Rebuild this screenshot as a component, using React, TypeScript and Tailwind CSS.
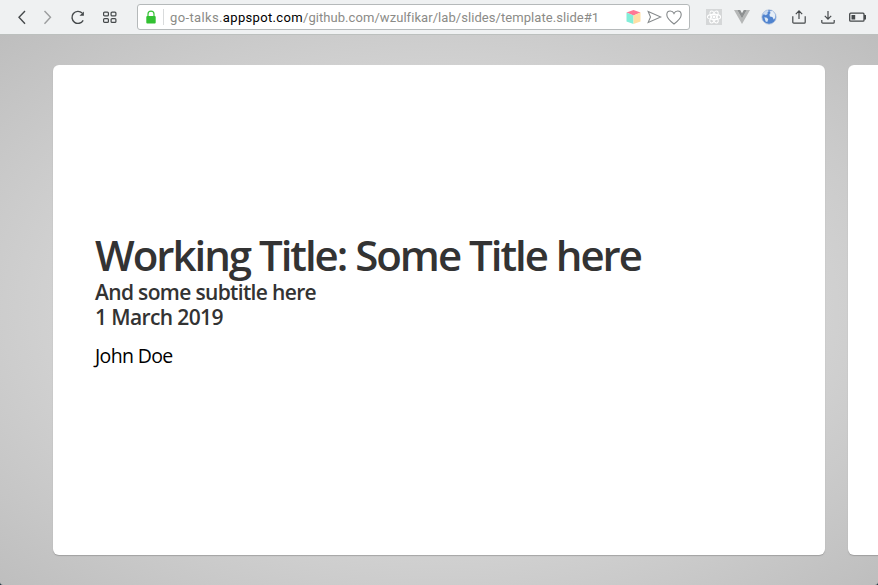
import type { ReactNode } from "react";

function Icon({ w, h, className = "", children }: { w: number; h: number; className?: string; children: ReactNode }) {
  return (
    <svg width={w} height={h} viewBox={`0 0 ${w} ${h}`} fill="none" className={`block shrink-0 ${className}`}>
      {children}
    </svg>
  );
}

function Toolbar() {
  return (
    <header className="flex h-[34px] shrink-0 items-center bg-[#eff1f2] text-[#45494b]">
      <Icon w={12} h={16} className="ml-4">
        <path d="M9 2 3 8.3 9 14.8" stroke="currentColor" strokeWidth="1.4" />
      </Icon>
      <Icon w={12} h={16} className="ml-[14px]">
        <path d="M2.5 2 8.5 8.3 2.5 14.8" stroke="#9b9d9e" strokeWidth="1.4" />
      </Icon>
      <Icon w={16} h={16} className="ml-4">
        <path d="M13.2 11.4A6 6 0 1 1 12.2 4.1" stroke="currentColor" strokeWidth="1.4" />
        <path d="M13.9 2.4v4.4H9.5z" fill="currentColor" />
      </Icon>
      <Icon w={14} h={14} className="ml-[17px]">
        <g stroke="currentColor" strokeWidth="1.2">
          <rect x=".6" y="2.1" width="4.8" height="3.8" rx="1" />
          <rect x="8.1" y="2.1" width="4.8" height="3.8" rx="1" />
          <rect x=".6" y="8.6" width="4.8" height="3.8" rx="1" />
          <rect x="8.1" y="8.6" width="4.8" height="3.8" rx="1" />
        </g>
      </Icon>
      <div className="ml-5 flex h-[26px] w-[553px] shrink-0 items-center rounded-[3px] border border-[#b5b9ba] bg-white">
        <Icon w={10} h={14} className="ml-2">
          <path d="M2 7V4.1a3 3 0 0 1 6 0V7" stroke="#36c336" strokeWidth="1.2" />
          <rect x=".3" y="6" width="9.4" height="7.4" rx="1" fill="#32c132" />
        </Icon>
        <div className="ml-[7px] h-4 w-px bg-[#d9dbdc]" />
        <p className="mt-px ml-[6px] w-[430px] whitespace-nowrap font-['Roboto',sans-serif] text-[13px] leading-4 tracking-[0.06px] text-[#8b8b87]">
          <span className="tracking-[0.37px]">go-talks.</span>
          <span className="tracking-[0.34px] text-black">appspot.com</span>/github.com/wzulfikar/lab/slides/template.slide#1
        </p>
        <Icon w={15} h={16} className="ml-[26px]">
          <path d="M7.5 1 14.5 3.5 7.5 6.5 .5 3.5z" fill="#ff7895" />
          <path d="M.5 3.5 7.5 6.5V15L.5 12.5z" fill="#83eed9" />
          <path d="M14.5 3.5 7.5 6.5V15l7-2.5z" fill="#ffdfa4" />
        </Icon>
        <Icon w={15} h={14} className="ml-[6px]">
          <path d="M1.2 1.6 13.8 7 1.2 12.4 3.5 7z" stroke="#85898b" strokeWidth="1.1" />
        </Icon>
        <Icon w={16} h={15} className="ml-[4px]">
          <path d="M8 14C4.5 11.4.8 8.3.8 4.8.8 2.5 2.3 1 4.3 1 6 1 7.3 2 8 3.5 8.7 2 10 1 11.7 1c2 0 3.5 1.5 3.5 3.8 0 3.5-3.7 6.6-7.2 9.2z" stroke="#85898b" strokeWidth="1.1" />
        </Icon>
      </div>
      <Icon w={16} h={16} className="ml-4">
        <rect width="16" height="16" fill="#d5d7d8" />
        <g stroke="white" strokeWidth="1.1">
          <ellipse cx="8" cy="8" rx="6.6" ry="2.6" />
          <ellipse cx="8" cy="8" rx="6.6" ry="2.6" transform="rotate(60 8 8)" />
          <ellipse cx="8" cy="8" rx="6.6" ry="2.6" transform="rotate(120 8 8)" />
        </g>
        <circle cx="8" cy="8" r="1.4" fill="white" />
      </Icon>
      <Icon w={16} h={14} className="ml-3">
        <path d="M0 0h3.2L8 8.4 12.8 0H16L8 14z" fill="#b5b7b7" />
        <path d="M3.2 0h3L8 3.2 9.8 0h3L8 8.4z" fill="#8d9091" />
      </Icon>
      <Icon w={16} h={16} className="ml-[11px]">
        <circle cx="8" cy="8" r="7.2" fill="#4f83cf" stroke="#b9c8de" strokeWidth=".8" />
        <path d="M1.6 5.4C2.6 3 4.6 1.5 7 1.1l.6 1.5-1.3 1.2.5 1.3-2.1 1.1-1.3-.6z" fill="#c9daf0" />
        <path d="M8.4 2.2 11.6 2l2.2 2.6.6 3.6-1.5 2.6-1.5-2.7-2.6-.6-.3-2.4 1.2-1z" fill="#e6eef7" />
        <path d="m3.3 8.3 2.6.4 1.3 1.6-.9 2.7-1.6-.5z" fill="#dce8f5" />
      </Icon>
      <Icon w={14} h={16} className="ml-[15px]">
        <path d="M.8 7.2v6a1 1 0 0 0 1 1h10.4a1 1 0 0 0 1-1v-6M7 10V2M3.8 5.1 7 1.9l3.2 3.2" stroke="currentColor" strokeWidth="1.2" />
      </Icon>
      <Icon w={14} h={16} className="ml-[15px]">
        <path d="M.8 11v2.2a1 1 0 0 0 1 1h10.4a1 1 0 0 0 1-1V11M7 2v8M3.8 6.9 7 10.1l3.2-3.2" stroke="currentColor" strokeWidth="1.2" />
      </Icon>
      <Icon w={18} h={12} className="ml-[14px]">
        <rect x=".7" y="2.2" width="14.3" height="8" rx="1" stroke="currentColor" strokeWidth="1.3" />
        <path d="M2.5 4h3.7v4.4H2.5zM15 4h2v4.4h-2z" fill="currentColor" />
      </Icon>
    </header>
  );
}

export default function App() {
  return (
    <div className="flex h-[585px] w-[878px] flex-col overflow-hidden bg-[#17313d]">
      <Toolbar />
      <main className="flex min-h-0 flex-1 items-start overflow-hidden rounded-b-[3px] border-t border-[#bcc0be] bg-[radial-gradient(rgb(240,240,240),rgb(190,190,190))] pt-[30px] pl-[53px]">
        <article className="flex h-[490px] w-[772px] shrink-0 flex-col rounded-[6px] bg-white pt-[165px] pl-[42px] font-['Open_Sans',sans-serif] text-[#333] shadow-[0_1px_1px_0_rgba(130,130,130,0.55)]">
          <h1 className="whitespace-nowrap text-[42px] leading-[50px] font-semibold tracking-[-2.02px]">Working Title: Some Title here</h1>
          <h2 className="whitespace-nowrap text-[21px] leading-[25px] font-semibold tracking-[-0.66px]">And some subtitle here</h2>
          <h2 className="whitespace-nowrap text-[21px] leading-[25px] font-semibold tracking-[-0.62px]">1 March 2019</h2>
          <p className="mt-[13px] whitespace-nowrap text-[19.5px] leading-[25px] tracking-[-0.64px] text-black">John Doe</p>
        </article>
        <article className="ml-[23px] h-[490px] w-[772px] shrink-0 rounded-[6px] bg-white shadow-[0_1px_1px_0_rgba(130,130,130,0.55)]" />
      </main>
    </div>
  );
}
